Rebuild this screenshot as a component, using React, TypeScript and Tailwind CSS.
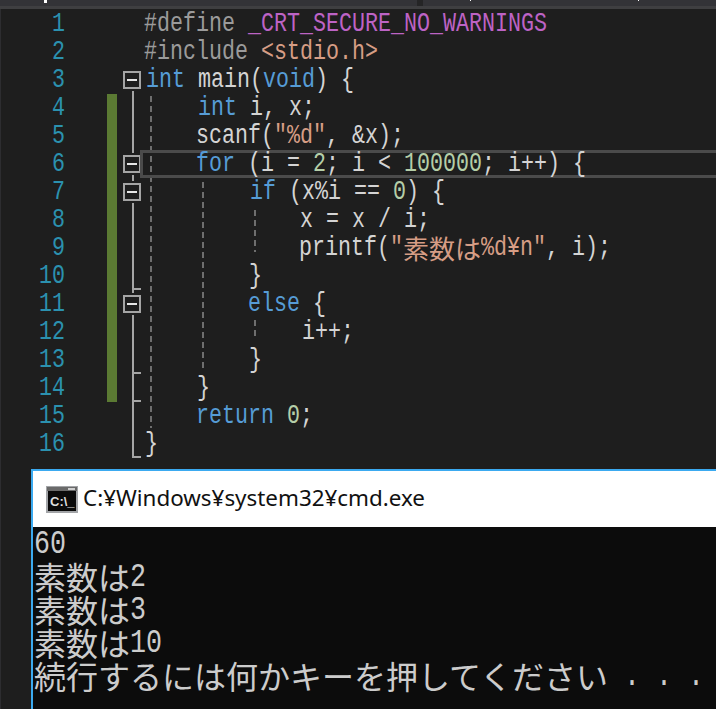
const mono = "font-['Liberation_Mono','DejaVu_Sans_Mono',monospace]";

type Tok = [string, string];

const BLUE = "text-[#569cd6]";
const TXT = "text-[#d4d4d4]";
const NUM = "text-[#b5cea8]";
const STR = "text-[#d69d85]";
const GRAY = "text-[#9b9b9b]";
const MACRO = "text-[#bd63c5]";

const lines: { pad: number; toks: Tok[] }[] = [
    { pad: 0, toks: [[GRAY, "#define "], [MACRO, "_CRT_SECURE_NO_WARNINGS"]] },
    { pad: 0, toks: [[GRAY, "#include "], [STR, "<stdio.h>"]] },
    { pad: 2, toks: [[BLUE, "int"], [TXT, " main("], [BLUE, "void"], [TXT, ") {"]] },
    { pad: 54, toks: [[BLUE, "int"], [TXT, " i, x;"]] },
    { pad: 52, toks: [[TXT, "scanf("], [STR, "″%d″"], [TXT, ", &x);"]] },
    { pad: 52, toks: [[BLUE, "for"], [TXT, " (i = "], [NUM, "2"], [TXT, "; i < "], [NUM, "100000"], [TXT, "; i++) {"]] },
    { pad: 106, toks: [[BLUE, "if"], [TXT, " (x%i == "], [NUM, "0"], [TXT, ") {"]] },
    { pad: 156, toks: [[TXT, "x = x / i;"]] },
    { pad: 155, toks: [[TXT, "printf("], [STR, "″"], [STR, "@素数は"], [STR, "%d¥n″"], [TXT, ", i);"]] },
    { pad: 105, toks: [[TXT, "}"]] },
    { pad: 104, toks: [[BLUE, "else"], [TXT, " {"]] },
    { pad: 158, toks: [[TXT, "i++;"]] },
    { pad: 105, toks: [[TXT, "}"]] },
    { pad: 53, toks: [[TXT, "}"]] },
    { pad: 52, toks: [[BLUE, "return"], [TXT, " "], [NUM, "0"], [TXT, ";"]] },
    { pad: 1, toks: [[TXT, "}"]] },
];

const folds = [3, 6, 7, 11];
const changed = [4, 14];

// fold margin + indent guides, drawn over the whole code area
function Guides() {
    const stroke = "#a5a5a5";
    return (
        <svg className="absolute left-[120px] top-[1px]" width="150" height="450">
            <g stroke="#6e6e6e" strokeWidth="2" strokeDasharray="6 4">
                <line x1="30" y1="86" x2="30" y2="418" />
                <line x1="82" y1="172" x2="82" y2="358" />
                <line x1="134" y1="200" x2="134" y2="242" />
                <line x1="134" y1="310" x2="134" y2="330" />
            </g>
            <g stroke={stroke} strokeWidth="2" fill="none">
                <path d="M12 70V447H20" />
                <path d="M12 279H20M12 363H20M12 391H20" />
            </g>
            {folds.map((n) => {
                const cy = (n - 1) * 28 + 14;
                return (
                    <g key={n}>
                        <rect x="1" y={cy - 11} width="20" height="22" fill="#1e1e1e" />
                        <rect x="3" y={cy - 8} width="16" height="16" fill="#1e1e1e" stroke={stroke} strokeWidth="2" />
                        <line x1="6" x2="16" y1={cy} y2={cy} stroke="#e6e6e6" strokeWidth="2" />
                    </g>
                );
            })}
        </svg>
    );
}

function CmdIcon() {
    return (
        <svg width="32" height="27" viewBox="0 0 32 27" className="shrink-0">
            <rect x="0" y="0" width="32" height="27" fill="#a3a5a8" />
            <rect x="1" y="1" width="30" height="4" fill="#6a6a6a" />
            <rect x="22" y="2" width="7" height="2" fill="#cfcfcf" />
            <rect x="2" y="5" width="28" height="20" fill="#0b0b0b" />
            <text x="4" y="20" fontSize="13" fontWeight="700" fill="#dedede" fontFamily="Liberation Sans">C:\_</text>
        </svg>
    );
}

function Con({ text }: { text: string }) {
    // full-width glyphs and half-width digits are set separately, like the console font
    const parts = text.split(/([0-9. ]+)/).filter(Boolean);
    return (
        <div className="h-[33px] flex items-center whitespace-pre">
            {parts.map((p, i) =>
                /^[0-9. ]+$/.test(p) ? (
                    <span key={i} className={`scale-y-[1.25] text-[26.67px] leading-[24px] ${mono}`}>{p}</span>
                ) : (
                    <span key={i} className="text-[32px] leading-[33px] font-normal font-['Noto_Sans_CJK_JP',sans-serif]">{p}</span>
                )
            )}
        </div>
    );
}

export default function App() {
    return (
        <div className="relative w-[716px] h-[709px] bg-[#1e1e1e] overflow-hidden flex flex-col">
            <div className="h-[6px] bg-[#333337] flex">
                <div className="ml-[417px] w-[6px] bg-[#252526]" />
            </div>
            <div className="h-[3px] bg-[#3f3f41]" />
            <div className="absolute left-[44px] top-0 w-[3px] h-[3px] bg-white" />
            <div className="absolute left-[470px] top-0 w-px h-px bg-white" />
            <div className="absolute left-[638px] top-0 w-px h-px bg-white" />
            <div className="flex-1 flex flex-col border-l border-[#2d2d30]">
                <div className="relative h-[460px] pt-px">
                    <Guides />
                    {lines.map((l, i) => {
                        const n = i + 1;
                        return (
                            <div key={n} className="relative flex h-[28px]">
                                {n === 6 && (
                                    <div className="absolute left-[139px] right-[-4px] inset-y-0 border-[3px] border-[#4b4b4b]" />
                                )}
                                <div className={`w-[64px] flex items-center justify-end text-[21.67px] text-[#2b91af] ${mono}`}>
                                    <span className="scale-y-[1.3] leading-[20px]">{n}</span>
                                </div>
                                <div className="ml-[42px] w-[10px]">
                                    {n >= changed[0] && n <= changed[1] && <div className="h-full bg-[#5b7a33]" />}
                                </div>
                                <div className="relative ml-[27px] flex-1 flex items-center whitespace-pre" style={{ paddingLeft: l.pad }}>
                                    {l.toks.map(([c, t], j) =>
                                        t.startsWith("@") ? (
                                            <span key={j} className={`text-[26px] leading-[28px] font-normal font-['Noto_Sans_CJK_JP',sans-serif] ${c}`}>{t.slice(1)}</span>
                                        ) : (
                                            <span key={j} className={`scale-y-[1.3] text-[21.67px] leading-[20px] ${mono} ${c}`}>{t}</span>
                                        )
                                    )}
                                </div>
                            </div>
                        );
                    })}
                </div>
                <div className="ml-[30px] flex-1 border-l-2 border-t-2 border-[#3baaf0] flex flex-col">
                    <div className="h-[56px] bg-white flex items-center gap-[5px] pl-[13px]">
                        <CmdIcon />
                        <span className="text-[22.4px] leading-[28px] -mt-[2px] text-[#111] font-['Noto_Sans',sans-serif]">C:¥Windows¥system32¥cmd.exe</span>
                    </div>
                    <div className="flex-1 bg-[#0c0c0c] text-[#cccccc] pl-px">
                        <Con text="60" />
                        <Con text="素数は2" />
                        <Con text="素数は3" />
                        <Con text="素数は10" />
                        <Con text="続行するには何かキーを押してください . . ." />
                    </div>
                </div>
            </div>
        </div>
    );
}
